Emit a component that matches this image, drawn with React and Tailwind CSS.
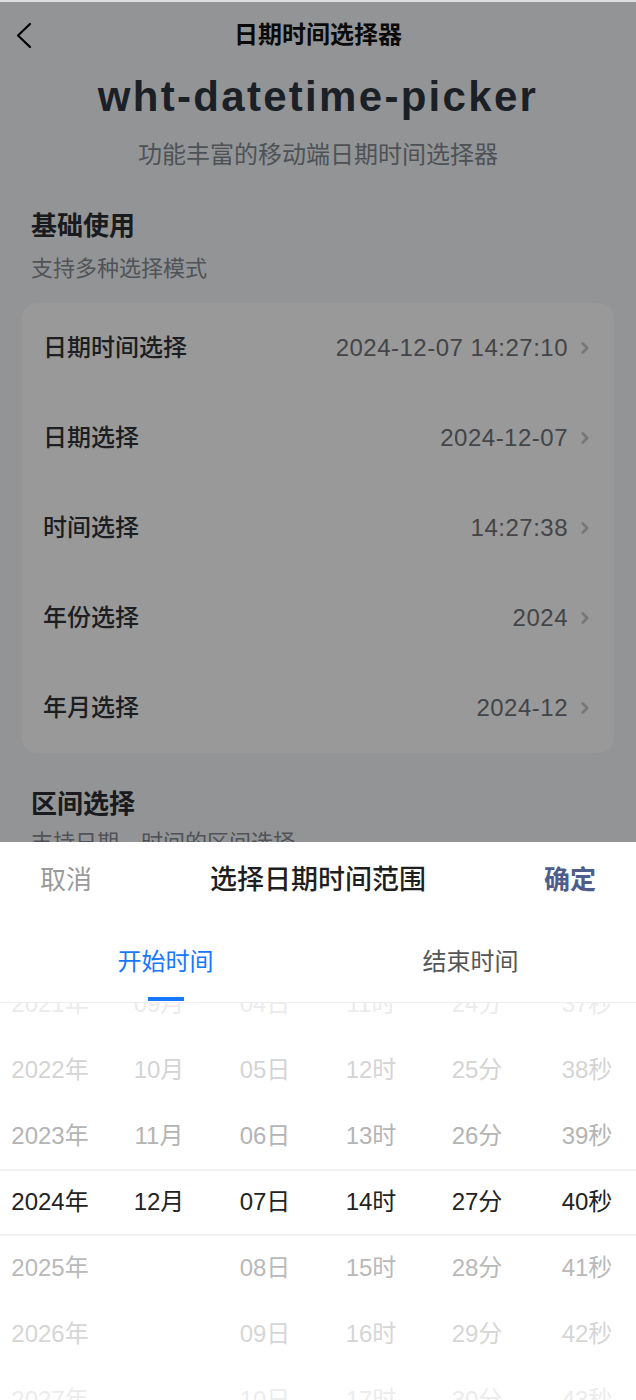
import { ChevronRight } from 'lucide-react'

const font = { fontFamily: '"Liberation Sans", "Noto Sans CJK SC", sans-serif' }

const rows = [
  { label: '日期时间选择', value: '2024-12-07 14:27:10' },
  { label: '日期选择', value: '2024-12-07' },
  { label: '时间选择', value: '14:27:38' },
  { label: '年份选择', value: '2024' },
  { label: '年月选择', value: '2024-12' },
]

const columns = [
  ['2021年', '2022年', '2023年', '2024年', '2025年', '2026年', '2027年'],
  ['09月', '10月', '11月', '12月', '', '', ''],
  ['04日', '05日', '06日', '07日', '08日', '09日', '10日'],
  ['11时', '12时', '13时', '14时', '15时', '16时', '17时'],
  ['24分', '25分', '26分', '27分', '28分', '29分', '30分'],
  ['37秒', '38秒', '39秒', '40秒', '41秒', '42秒', '43秒'],
]

// row tint by distance from the selected line
const tints = ['text-[#ebebeb]', 'text-[#d4d4d4]', 'text-[#b4b4b4]', 'text-[#222222]', 'text-[#b9b9b9]', 'text-[#d6d6d6]', 'text-[#ececec]']

export default function App() {
  return (
    <div className="relative h-[1400px] w-[636px] overflow-hidden bg-[#f6f7f9]" style={font}>
      {/* Page */}
      <div className="flex h-[70px] items-center justify-center relative">
        <svg className="absolute left-[12px] top-[20px]" width="24" height="30" viewBox="0 0 24 30" fill="none">
          <polyline points="18,4 6,15.5 18,27" stroke="#000" strokeWidth="2.2" strokeLinecap="round" strokeLinejoin="round" />
        </svg>
        <h1 className="text-[24px] font-bold text-[#111]">日期时间选择器</h1>
      </div>
      <div className="flex flex-col items-center">
        <div className="mt-[1px] text-[42px] font-bold leading-[52px] tracking-[2.3px] text-[#2e3642]">wht-datetime-picker</div>
        <p className="mt-[17px] text-[24px] leading-[30px] text-[#838991]">功能丰富的移动端日期时间选择器</p>
      </div>

      <div className="px-[31px] pt-[39px]">
        <h2 className="text-[26px] font-bold leading-[34px] text-[#2a2e35]">基础使用</h2>
        <p className="mt-[12px] text-[22px] leading-[28px] text-[#858a92]">支持多种选择模式</p>
      </div>

      <div className="mx-[22px] mt-[20px] rounded-[16px] bg-white">
        {rows.map((r) => (
          <div key={r.label} className="flex h-[90px] items-center justify-between pl-[21px] pr-[20px]">
            <span className="text-[24px] font-medium text-[#2f3338]">{r.label}</span>
            <div className="flex items-center gap-[8px]">
              <span className="text-[24px] tracking-[0.5px] text-[#707378]">{r.value}</span>
              <ChevronRight className="h-[18px] w-[18px] text-[#c4c6c9]" strokeWidth={3.5} />
            </div>
          </div>
        ))}
      </div>

      <div className="px-[31px] pt-[34px]">
        <h2 className="text-[26px] font-bold leading-[34px] text-[#2a2e35]">区间选择</h2>
        <p className="mt-[8px] text-[22px] leading-[28px] text-[#858a92]">支持日期、时间的区间选择</p>
      </div>

      {/* Mask */}
      <div className="absolute inset-0 bg-black/40" />
      <div className="absolute left-0 right-0 top-0 h-[2px] bg-[#dedede]" />

      {/* Bottom sheet */}
      <div className="absolute bottom-0 left-0 right-0 top-[842px] flex flex-col bg-white">
        <div className="flex h-[77px] items-center justify-between px-[40px]">
          <span className="text-[26px] text-[#9a9a9a]">取消</span>
          <span className="text-[27px] font-medium text-[#1f1f1f]">选择日期时间范围</span>
          <span className="text-[26px] font-bold text-[#4e5d8c]">确定</span>
        </div>
        <div className="flex h-[84px] border-b border-[#eeeeee] px-[13px]">
          <div className="flex flex-1 flex-col items-center">
            <span className="mt-[28px] text-[24px] leading-[30px] text-[#1677ff]">开始时间</span>
            <span className="mt-auto mb-[1px] h-[4px] w-[36px] bg-[#1677ff]" />
          </div>
          <div className="flex flex-1 flex-col items-center">
            <span className="mt-[28px] text-[24px] leading-[30px] text-[#555555]">结束时间</span>
          </div>
        </div>
        <div className="relative flex-1 overflow-hidden">
          <div className="absolute left-0 right-0 top-[166px] h-[67px] border-y-2 border-[#f2f2f2]" />
          <div className="-mt-[32px] grid grid-cols-6">
            {columns.map((col, ci) => (
              <div key={ci} className="flex flex-col">
                {col.map((v, ri) => (
                  <div key={ri} className={`flex h-[66px] items-center justify-center text-[24px] ${tints[ri]} ${ci === 0 ? 'pr-[6px]' : ''} ${ci === 5 ? 'pl-[8px]' : ''}`}>
                    {v}
                  </div>
                ))}
              </div>
            ))}
          </div>
        </div>
      </div>
    </div>
  )
}
